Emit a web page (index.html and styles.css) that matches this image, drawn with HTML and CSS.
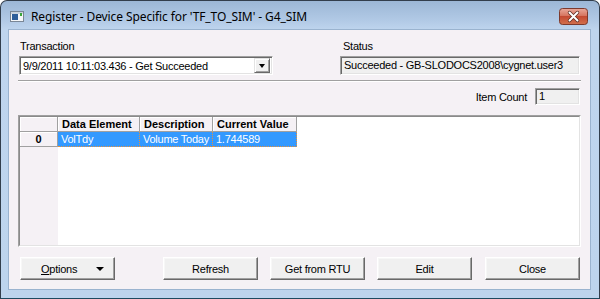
FILE: index.html
```html
<!DOCTYPE html>
<html>
<head>
<meta charset="utf-8">
<link rel="stylesheet" href="styles.css">
</head>
<body>
<div class="window">
  <div class="titlebar">
    <svg class="appicon" width="14" height="11" viewBox="0 0 14 11">
      <rect x="0.5" y="0.5" width="13" height="10" fill="#f4f6f8" stroke="#7a8796"/>
      <rect x="1" y="1" width="12" height="2" fill="#c9d3de"/>
      <rect x="2" y="3" width="6" height="6" fill="#2f5f9a"/>
      <rect x="10" y="2" width="2" height="3" fill="#3aa63a"/>
    </svg>
    <span class="title">Register - Device Specific for 'TF_TO_SIM' - G4_SIM</span>
    <div class="closebtn">
      <svg width="29" height="17" viewBox="0 0 29 17">
        <defs>
          <linearGradient id="cg" x1="0" y1="0" x2="0" y2="1">
            <stop offset="0" stop-color="#e9a99b"/>
            <stop offset="0.45" stop-color="#d67560"/>
            <stop offset="0.5" stop-color="#c44a32"/>
            <stop offset="1" stop-color="#d2714e"/>
          </linearGradient>
        </defs>
        <rect x="0.5" y="0.5" width="28" height="16" rx="3" fill="url(#cg)" stroke="#7d3a2d"/>
        <path d="M10.5 4.5 L18.5 12.5 M18.5 4.5 L10.5 12.5" stroke="#5a2a20" stroke-width="3.4" stroke-linecap="round"/>
        <path d="M10.5 4.5 L18.5 12.5 M18.5 4.5 L10.5 12.5" stroke="#ffffff" stroke-width="2" stroke-linecap="round"/>
      </svg>
    </div>
  </div>
  <div class="client">
    <div class="toprow">
      <div class="group trans">
        <div class="label">Transaction</div>
        <div class="combo">
          <span class="combo-text">9/9/2011 10:11:03.436 - Get Succeeded</span>
          <span class="dd"><span class="tri"></span></span>
        </div>
      </div>
      <div class="group status">
        <div class="label status-label">Status</div>
        <div class="textbox">Succeeded - GB-SLODOCS2008\cygnet.user3</div>
      </div>
    </div>
    <div class="sep"></div>
    <div class="countrow">
      <span class="label">Item Count</span>
      <div class="textbox count">1</div>
    </div>
    <div class="grid-outer">
      <div class="grid-inner">
        <div class="fg">
          <div class="hc rh"></div>
          <div class="hc">Data Element</div>
          <div class="hc">Description</div>
          <div class="hc">Current Value</div>
          <div class="hc rh">0</div>
          <div class="dc">VolTdy</div>
          <div class="dc">Volume Today</div>
          <div class="dc">1.744589</div>
          <div class="rhfill"></div>
        </div>
      </div>
    </div>
    <div class="buttons">
      <div class="btn options"><span class="opt-text"><u>O</u>ptions</span><span class="tri"></span></div>
      <div class="btn-group">
        <div class="btn">Refresh</div>
        <div class="btn">Get from RTU</div>
        <div class="btn">Edit</div>
        <div class="btn close">Close</div>
      </div>
    </div>
  </div>
</div>
</body>
</html>
```
FILE: styles.css
```css
html, body {
  margin: 0;
  padding: 0;
  background: #ffffff;
}
.window {
  width: 600px;
  height: 299px;
  box-sizing: border-box;
  border: 1px solid #323e4c;
  border-bottom-color: #1e4a60;
  border-radius: 7px 7px 0 0;
  padding: 0 8px 8px 7px;
  display: flex;
  flex-direction: column;
  background: linear-gradient(to bottom, #9cb7d6 0, #b2cae6 20px, #bfd5ee 29px, #bdd4ed 100%);
  font-family: "Liberation Sans", Arial, sans-serif;
  font-size: 11px;
  letter-spacing: -0.25px;
  color: #000;
}
.titlebar {
  height: 29px;
  display: flex;
  align-items: center;
  padding-left: 2px;
}
.appicon {
  display: block;
  margin-top: 3px;
  flex: none;
}
.title {
  font-family: "Noto Sans", "Open Sans", sans-serif;
  font-size: 12px;
  margin-left: 7px;
  margin-top: 3px;
  color: #000;
  letter-spacing: -0.1px;
}
.closebtn {
  margin-left: auto;
  margin-right: 3px;
  margin-top: 3px;
  height: 17px;
}
.closebtn svg { display: block; }
.client {
  flex: 1;
  background: #f5f1f5;
  border: 1px solid #9ab3cf;
  padding: 10px 9px 9px 9px;
  display: flex;
  flex-direction: column;
}
.label {
  height: 13px;
  line-height: 13px;
  white-space: nowrap;
}
.toprow {
  display: flex;
  justify-content: space-between;
}
.group.trans {
  width: 254px;
  margin-left: 1px;
}
.group.trans .label { padding-left: 1px; }
.group.status {
  width: 240px;
  margin-right: 1px;
}
.status-label { padding-left: 3px; }
.combo {
  margin-top: 3px;
  height: 19px;
  box-sizing: border-box;
  background: #fff;
  border: 1px solid;
  border-color: #a0a0a0 #fff #fff #a0a0a0;
  box-shadow: inset 1px 1px 0 #696969, inset -1px -1px 0 #e3e3e3;
  display: flex;
  align-items: center;
  padding: 2px 2px 2px 2px;
}
.combo-text {
  flex: 1;
  padding-left: 1px;
  white-space: nowrap;
}
.dd {
  width: 16px;
  height: 15px;
  box-sizing: border-box;
  background: #f0f0f0;
  border: 1px solid;
  border-color: #e3e3e3 #696969 #696969 #e3e3e3;
  box-shadow: inset 1px 1px 0 #fff, inset -1px -1px 0 #a0a0a0;
  display: flex;
  align-items: center;
  justify-content: center;
}
.tri {
  width: 0;
  height: 0;
  border-left: 3.5px solid transparent;
  border-right: 3.5px solid transparent;
  border-top: 4px solid #000;
}
.textbox {
  margin-top: 3px;
  height: 19px;
  box-sizing: border-box;
  background: #f0f0f0;
  border: 1px solid;
  border-color: #a0a0a0 #fff #fff #a0a0a0;
  box-shadow: inset 1px 1px 0 #696969, inset -1px -1px 0 #e3e3e3;
  padding: 0 3px;
  line-height: 17px;
  white-space: nowrap;
}
.sep {
  margin-top: 5px;
  border-top: 1px solid #a0a0a0;
  border-bottom: 1px solid #fff;
  height: 0;
}
.countrow {
  margin-top: 6px;
  display: flex;
  justify-content: flex-end;
  align-items: center;
  padding-right: 1px;
  height: 17px;
}
.countrow .label {
  margin-right: 8px;
  margin-top: 1px;
}
.textbox.count {
  margin-top: 0;
  width: 45px;
  height: 17px;
  line-height: 15px;
  padding-left: 3px;
}
.grid-outer {
  margin-top: 10px;
  height: 132px;
  box-sizing: border-box;
  border: 1px solid;
  border-color: #a0a0a0 #fff #fff #a0a0a0;
  display: flex;
}
.grid-inner {
  flex: 1;
  border: 1px solid;
  border-color: #8a8a8a #e3e3e3 #e3e3e3 #8a8a8a;
  background: #fff;
  display: flex;
}
.fg {
  display: grid;
  grid-template-columns: 38px 82px 73px 84px;
  grid-template-rows: 15px 15px 1fr;
}
.hc {
  background: #f5f1f5;
  border-right: 1px solid #a0a0a0;
  border-bottom: 1px solid #a0a0a0;
  box-shadow: inset 1px 1px 0 #fff;
  font-weight: bold;
  letter-spacing: 0;
  line-height: 14px;
  padding-left: 4px;
  white-space: nowrap;
  overflow: hidden;
}
.hc.rh {
  text-align: center;
  padding-left: 0;
}
.dc {
  background: #3399ff;
  color: #fff;
  border-right: 1px dotted #e8913a;
  border-bottom: 1px dotted #e8913a;
  line-height: 14px;
  padding-left: 3px;
  white-space: nowrap;
  overflow: hidden;
}
.rhfill {
  background: #f5f1f5;
}
.buttons {
  margin-top: 10px;
  height: 23px;
  display: flex;
  padding-left: 2px;
  padding-right: 1px;
}
.btn-group {
  margin-left: auto;
  display: flex;
  gap: 12px;
}
.btn {
  width: 95px;
  height: 23px;
  box-sizing: border-box;
  background: #f0f0f0;
  border: 1px solid;
  border-color: #fff #696969 #696969 #fff;
  box-shadow: inset -1px -1px 0 #a0a0a0, inset 1px 1px 0 #f7f7f7;
  display: flex;
  align-items: center;
  justify-content: center;
  white-space: nowrap;
}
.btn.close { margin-left: 1px; }
.btn.options {
  justify-content: flex-start;
  padding-left: 20px;
}
.opt-text { flex: 1; }
.btn.options .tri {
  margin-right: 10px;
  margin-top: 1px;
  border-left-width: 4px;
  border-right-width: 4px;
  border-top-width: 4px;
}
```
